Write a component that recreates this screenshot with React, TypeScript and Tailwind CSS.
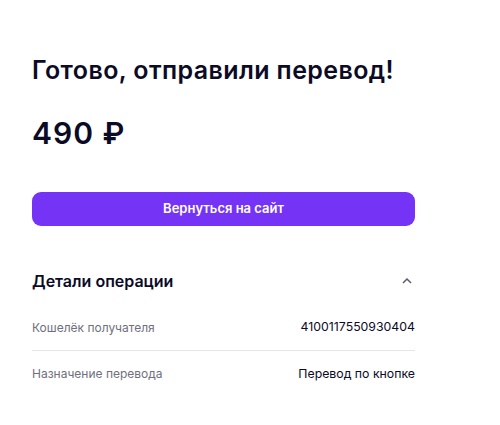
const details = [
  { label: "Кошелёк получателя", value: "4100117550930404" },
  { label: "Назначение перевода", value: "Перевод по кнопке" },
];

export default function App() {
  return (
    <div className="min-h-screen bg-white font-['Inter',sans-serif] text-[#0b0b26]">
      <div className="w-[383px] ml-[32px] pt-[52px]">
        {/* Title */}
        <h1 className="text-[25px] leading-[36px] font-semibold tracking-[0.4px]">
          Готово, отправили перевод!
        </h1>

        {/* Amount */}
        <div className="mt-[25px] text-[30px] leading-[40px] font-semibold tracking-[1px]">490 ₽</div>

        {/* Button */}
        <button className="mt-[39px] w-full h-[34px] rounded-[9px] bg-[#7433f5] text-white text-[13px] font-semibold">
          Вернуться на сайт
        </button>

        {/* Details */}
        <div className="mt-[43px] flex items-center justify-between">
          <h2 className="text-[16px] leading-[24px] font-semibold">Детали операции</h2>
          <svg width="12" height="12" viewBox="0 0 12 12" className="mr-[2px]">
            <path d="M2 8 L6 4 L10 8" fill="none" stroke="#5b5b6e" strokeWidth="1.5" />
          </svg>
        </div>

        <div className="mt-[12px]">
          {details.map((d, i) => (
            <div
              key={d.label}
              className={
                "flex items-center justify-between h-[46px] " +
                (i === 0 ? "border-b border-[#e6e6ea]" : "")
              }
            >
              <span className="text-[12px] text-[#6f6f7d]">{d.label}</span>
              <span className="text-[12.3px] text-[#0b0b26]">{d.value}</span>
            </div>
          ))}
        </div>
      </div>
    </div>
  );
}
